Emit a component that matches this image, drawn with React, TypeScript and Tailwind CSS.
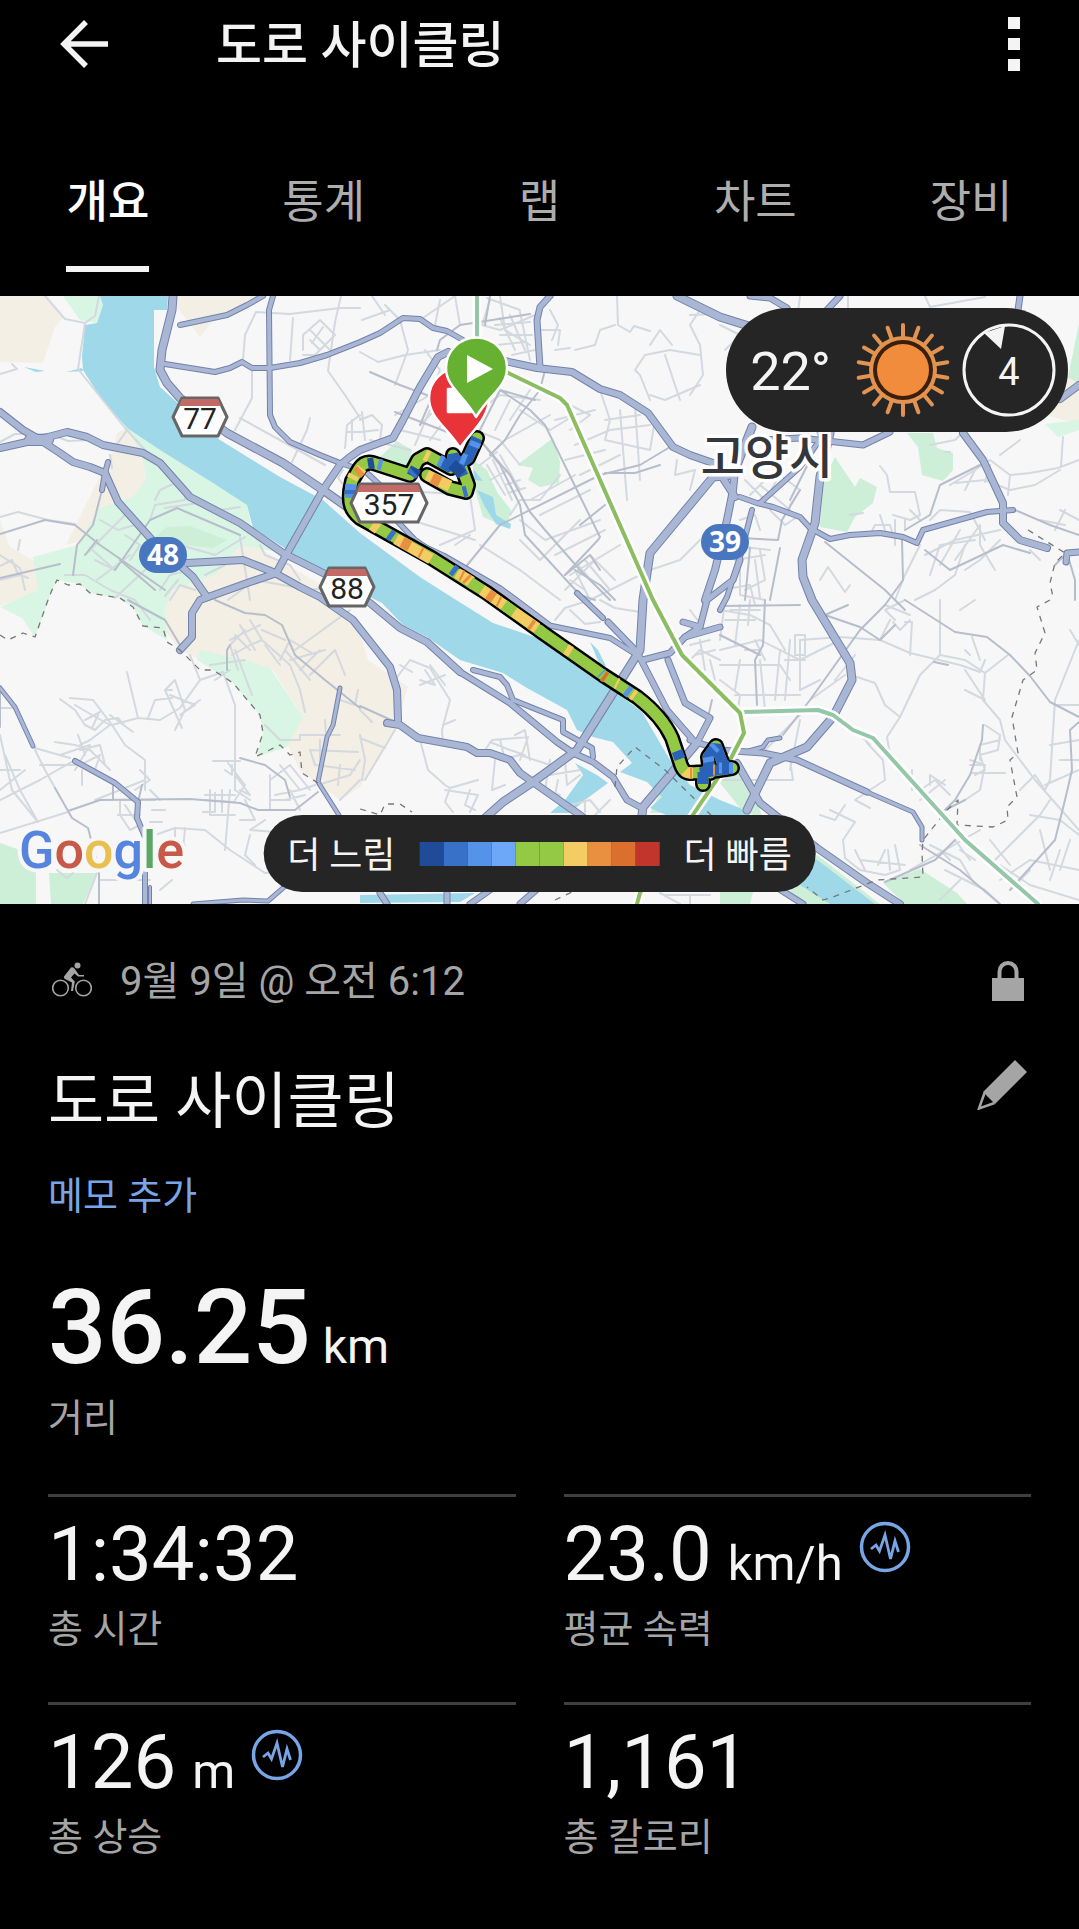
import { useState } from "react";

const tabs = ["개요", "통계", "랩", "차트", "장비"];

const speedColors = [
  "bg-[#1f4b99]",
  "bg-[#3871c8]",
  "bg-[#5593ea]",
  "bg-[#6ca7f8]",
  "bg-[#94c945]",
  "bg-[#94c945]",
  "bg-[#f3cd63]",
  "bg-[#e98f40]",
  "bg-[#db6f2d]",
  "bg-[#c1352c]",
];

const stats = [
  { value: "1:34:32", unit: "", label: "총 시간", graph: false },
  { value: "23.0", unit: "km/h", label: "평균 속력", graph: true },
  { value: "126", unit: "m", label: "총 상승", graph: true },
  { value: "1,161", unit: "", label: "총 칼로리", graph: false },
];

// ---- map data ----

const beige = [
  "M0 296H48L63 317L55 327L43 363L0 362Z",
  "M175 296H260L245 305L215 318L200 337L177 307Z",
  "M117 433L127 428L143 460L146 480L137 497L112 505L85 540L66 545L113 450Z",
  "M0 520L10 547L33 560L40 590L0 606Z",
  "M160 560L240 537L330 590L362 640L368 660L408 687L395 730L360 787L340 800L300 770L287 743L303 717L273 670L200 660L180 650L165 630Z",
  "M1079 372L1050 384L1045 415L1079 424Z",
];

const lightGreen = [
  "M63 296H100L103 305L97 323L80 320Z",
  "M127 428L160 450L213 483L247 505L253 535L283 553L240 545L215 575L172 590L165 610L167 640L143 626L133 607L118 598L90 593L80 584L57 580L50 596L35 637L22 618L0 607L38 590L33 557L77 545L100 508L133 497L146 480L143 460Z",
  "M200 650L245 660L270 668L303 717L287 747L257 757L263 733L260 715L233 683L213 670L197 660Z",
  "M1045 424L1079 420V430L1058 437Z",
];

const green = [
  "M167 527L190 526L227 540L213 548L185 545L155 537Z",
  "M380 457L397 441L412 450L408 470L385 465Z",
  "M473 460L487 470L497 492L511 510L507 527L483 517L473 483Z",
  "M553 438L560 462L559 483L540 487L528 480L533 468L517 465Z",
  "M835 457L855 487L860 478L877 487L873 503L855 517L847 532L820 527L822 483Z",
  "M907 433H933L937 448L953 453L953 470L943 481L922 475L918 447Z",
  "M1079 323L1068 377L1079 384Z",
  "M883 883L920 869L957 893L967 904H905Z",
  "M817 855L880 904H800L790 890Z",
  "M720 783L737 767L757 800L763 820L740 808Z",
  "M663 787L680 813H650Z",
  "M0 843L20 850L36 873V904H0ZM49 873H97L83 904H51Z",
  "M720 892H753L750 904H720Z",
];

const water = [
  "M168 296H100L103 305L97 323L85 325L82 357L83 370L100 397L127 428L160 450L213 483L247 505L253 528L283 547L310 567L345 585L382 603L403 625L427 637L460 660L503 673L527 688L567 710L577 730L593 737L613 742L632 763L620 772L647 782L662 797L650 808L700 830L760 870L797 883L830 904H875L820 862L740 808L720 800L690 785L670 760L642 712L600 680L543 640L493 623L453 598L420 577L360 533L342 517L323 500L280 477L220 440L180 405L160 387L154 367V310H167Z",
  "M477 490L493 497L496 515L511 524L510 529L496 524L485 507Z",
  "M474 470L483 481L474 480Z",
  "M575 763L597 775L608 783L585 800L570 813H550L565 800L583 775Z",
  "M590 642L598 650L606 666L600 665Z",
  "M360 895L475 893L460 902L360 903Z",
  "M24 367L45 371L36 372ZM66 372L82 368L83 371Z",
];

const minorRoads = [
  "M45 296L65 319L85 323L95 316L99 296",
  "M85 323L78 369L125 428L145 450",
  "M0 374L17 369L12 364",
  "M0 442L15 434L50 434L68 441L90 440",
  "M113 450L127 430M110 455L112 468",
  "M0 517L18 512L48 520L75 524",
  "M115 598L145 570L180 545L215 555L245 537M150 620L135 600L110 590L85 575L65 575",
  "M155 500L160 490L175 483M150 520L155 505L185 500L185 487M165 508L205 502M220 510L240 507",
  "M90 548L115 570L95 560M85 555L120 520L128 512M100 520L118 530L135 525M97 580L130 555M125 535L140 545L130 560",
  "M240 537L250 600M260 545L265 555L290 565L300 580M228 600L255 580L310 590L345 585",
  "M170 600L180 585L195 590M205 575L225 565M160 590L170 575L190 570M165 596L178 580",
  "M0 555L20 568L25 590M0 566L12 560L18 574L28 578M0 580L20 575M18 550L20 540",
  "M243 360L245 335L256 312L290 314L340 308L360 308M293 318L290 360M341 296L335 322L328 371L345 395L360 418",
  "M303 350L303 335L320 320L335 335L315 355H303M310 330L330 350M320 350L310 340M323 327L312 343",
  "M252 370V398L235 430M240 418L325 465M310 418L307 430L292 462L300 445",
  "M345 448L347 425L360 415M348 432H360M352 440V420M343 470L338 478L345 487",
  "M362 320L390 310M360 352L378 362L405 355L440 350M385 305L400 320L408 350L395 385M372 296L385 315M420 320L455 296M440 300L435 325L450 335",
  "M455 296L460 325M490 300L482 325L500 330L535 315M487 298L520 310M500 296L505 330L530 345M540 330L560 330L558 345",
  "M495 325L530 322M500 318L515 350M510 315L525 350M520 312L530 360M500 335L532 335M497 345L525 342M512 355L535 350",
  "M550 310L558 325L552 340M555 350L570 348M575 350L595 345L600 330L615 325M617 296L618 325L630 332L634 326L650 331",
  "M360 420L372 415L382 425L380 440M360 432L378 430M362 412L365 440M370 440L410 450",
  "M395 415L430 395L440 370L425 350M400 430L440 440M420 425L440 405M440 405L460 380M430 440L460 400M415 445L430 410",
  "M480 410L500 395L540 400M495 430L510 400M505 440L550 415M475 430L500 440L520 465M520 410L550 430L575 415M530 390L510 420",
  "M560 400L590 415L570 430M555 420L595 410M575 445L610 430M565 460L605 450M580 475L620 455M530 500L575 475M540 515L590 490",
  "M508 470L490 480M500 455L520 490M493 460L512 500M487 465L505 495M497 452L480 465M505 485L520 480M508 493L525 488",
  "M510 515L520 500L540 500L560 475M520 520L545 540M545 540L600 520M555 555L605 530M570 575L620 545M520 540L540 560L580 520",
  "M575 570L590 600M585 560L610 590M565 590L595 560M570 580L585 590M578 565L595 585M590 555L615 580",
  "M600 390L610 420L605 440M605 420L640 415M610 430L650 425M620 410L625 475M635 405L640 480M605 440L650 450L655 420M650 395L665 400L700 385M650 400L640 375L635 370L645 355L670 350L700 355M665 355L680 400",
  "M700 310L690 325L700 345L703 375L690 395M690 315L715 314M672 345L660 330L650 345",
  "M677 460L675 475L695 470L690 490M625 475L627 500M590 600L650 570L680 560L700 540",
  "M360 500L390 490L470 495L475 530M395 515L475 540M440 545L475 530M455 545L470 535M480 545L520 570L560 600",
  "M800 296L797 320M848 296V320M925 296L930 307L985 297M720 325L740 335M735 340L725 350",
  "M880 466L887 475L890 492H915L920 515L910 520L893 515M930 445L955 440L965 430M945 452H950M950 485L975 470L990 460L1010 475L1030 473L1058 468L1079 460",
  "M955 483L985 480L1010 490L1035 485L1060 470M975 470L965 490M990 465L985 482M1010 475L1008 495M1063 437L1061 466M1020 440L1000 455M950 410L990 420L1020 415",
  "M930 520L940 510L970 512L985 540M925 555L955 540L1000 530M940 565L960 530M955 560L980 525M965 570L980 560L1000 540M980 525V545L995 570",
  "M895 600L905 575L920 545M915 600L935 590L955 575L965 545M930 575L940 545L975 540",
  "M850 515L863 513M870 535L875 525L890 525L893 535M880 515L885 530M895 520V545M905 528V520M910 510L920 520",
  "M820 580L828 567M828 567L845 592L850 585",
  "M725 545L770 550M735 560L765 555M740 570V595L765 600M720 590L750 585L755 605M760 550L765 580L745 590M755 560L760 598",
  "M745 480L765 500L780 475L800 490L790 505M750 495L775 470M760 485L790 510M770 510L785 525L800 515M740 520L755 515L760 530",
  "M1060 510L1079 520M1055 530L1065 510M1040 520L1065 525M1030 550L1040 560M720 610L750 615L770 625L785 650",
  "M725 600L720 640M740 605L735 645M750 600L748 625M730 610H760M725 620H755M720 650L760 640L800 660L840 640M720 665H780L790 680M740 660L735 690",
  "M780 650L775 700M790 640L785 700M760 660L765 710M735 695H800M720 680L740 695L738 710M800 640V690M795 635H805V655H795ZM785 660H805M755 640L765 660M760 650H745",
  "M800 640L840 637L880 640L910 653L960 665L980 672L985 660",
  "M895 620L885 610L905 600M905 622H912L910 655M890 620L880 640M893 622L900 630L910 620M885 605L910 615",
  "M940 600L940 655L920 675L900 717L887 737L890 755M848 674L875 683L885 705L900 717",
  "M940 655L965 660L985 673L1008 655M972 637L980 660M985 673L983 700L1000 720L1005 740L1020 760L1035 780L1079 830",
  "M965 670L985 700L965 690M960 610L975 600M965 650L970 655",
  "M985 725L1000 735L998 750L980 755L985 770L975 775M970 760L985 765L980 790L965 800M970 765H985M972 773H1005M980 760V745L1000 740",
  "M1079 640L1055 700L1050 780L1045 790L1035 775L1020 790M1079 740L1050 745M1045 785L1079 770M1050 800L1040 815L1010 845L990 865",
  "M1055 705H1079M1030 815L1060 820L1079 835M1070 630L1079 645M1060 760H1079",
  "M867 743L883 760L885 780L870 790L855 800L870 808M845 805L835 820L820 815M830 810L855 822L843 840L845 858",
  "M845 858L860 870L885 875L900 870L895 845M855 850L865 870M860 860L905 865M878 865L885 850M890 870L888 850M840 862L850 875",
  "M910 870L945 850L980 830M930 845L960 860L975 885M940 850L950 860M955 840L970 860M945 870L985 890L1000 904M960 850L975 860M960 880L940 900",
  "M990 840L1010 865M1000 865L1030 885L1079 900M1040 830L1050 870M1060 850L1050 880M1030 870L1010 890M1070 840L1060 870M1000 880L1030 860L1079 870",
  "M0 735L12 790L38 822M0 800L40 780L75 760M0 833L68 812M0 708H15M25 770L0 790M0 770H20M5 755L20 790L38 822M35 750L45 770L55 788M40 765H75M35 748L70 758",
  "M127 672L138 718L112 725L93 700L70 698M148 718L155 700L172 698M138 718L160 720L180 708L200 680L223 672M172 690L165 690L175 680L185 710L175 730M170 695L195 705L180 715L200 700M165 690L182 728",
  "M60 699L75 710L85 725L95 730L105 720L118 718L124 725M75 705L92 715L110 725M85 720L100 712M92 728L98 715M110 725L90 740L80 745M112 725L125 745L145 760V790M133 732L110 715",
  "M55 742L75 745L90 750L110 770M60 755L90 745L75 770M78 735L85 755M80 750L100 745L105 765M80 765L100 755L95 770M82 770V785",
  "M200 680L190 655M223 672L235 705V790M215 680L230 670M210 665L245 660M213 761H240M232 765V775L225 770M235 775L250 795L240 790M228 763L245 785L235 800",
  "M205 795H235M205 800L235 802M210 790V815H235M215 793V812M245 800L255 820H240M222 790V812M203 812H215M235 790L250 800",
  "M120 800V815L130 830L140 825M120 800H155M95 800L120 790L145 780M125 805L135 820M118 815H140M150 790L160 800M152 810H165M150 822H162M140 770L150 780L135 790",
  "M155 835L175 828L205 830L230 850L265 873L300 870M175 828V845M185 828L183 850M170 845H185M250 835L245 855L255 865M230 790L225 850M265 820L250 830L275 832",
  "M100 880H150M160 890L172 880M85 904L97 873M57 870L67 878L73 873",
  "M245 630L230 645L238 670M230 640L260 625M235 635L250 650M240 625L255 650M250 620L262 640M232 655L250 645L262 640L290 665L300 690M235 650L252 695",
  "M265 645L280 665M262 630L285 640M295 650L350 610M280 660L290 640L315 655M290 660L325 650M300 670L320 650M310 675L335 650L345 675M285 650L310 680M300 690L305 712",
  "M265 725L280 740H300V735H340M310 750L358 752M310 750L315 765L355 770M320 760V740M340 765L338 785M325 720L326 735M340 700L355 705L358 690M318 785L350 775L360 760",
  "M270 780L290 765L310 790M275 795L300 790L315 785M285 800L305 795M280 765L300 790M290 790L300 810M270 775V810M270 800H290M340 800L360 780",
  "M395 680L410 660L430 668L450 700L442 730L443 745M420 685L445 675M425 670L435 685L420 680M430 665L445 685M400 665L412 672M443 725L455 720",
  "M420 740L428 770L445 785L450 788L445 802L453 812M445 790L478 795L470 812M470 790L465 805L475 810M450 788L478 780",
  "M485 750L492 740L528 737L520 760M490 742L510 750L525 755M500 760L520 755L550 765M495 760L492 790L505 785M500 740L505 760M515 735L525 730L530 760M550 760L545 790L560 795M565 760L567 785L580 775M558 780L555 795M550 775L580 770",
  "M570 805L590 800L600 812M585 800V812M590 820L610 800",
  "M555 620L565 608L590 600M600 600L615 608L640 612M570 610L585 624L600 622",
  "M690 645L710 640M695 655L715 650M700 640L705 670M690 660L700 650L720 660M710 660L715 680M690 610L705 630",
  "M360 735L365 760L362 780M360 738L385 748M365 780L395 730M360 710L372 722",
  "M710 780H793L790 760M790 770L800 720M760 755L800 715M830 625L845 650L848 674M810 700L845 675M800 690L820 680M855 655L835 680M835 720L855 730L870 745",
  "M660 893L680 904M665 895H710M690 895V904",
  "M912 770V790M920 790L935 780L950 795M930 785V775L945 785M920 800L945 780",
];

const mediumRoads = [
  "M0 534L45 520L75 525L100 545L165 590M0 578L60 564M102 490L93 525L77 545L73 575",
  "M115 570L150 520L177 508L240 535M120 560L155 590M97 540L85 555",
  "M128 600L165 620L180 645M215 600L245 613L265 615L282 625L295 655L325 680L360 708",
  "M227 670V650L230 645M68 811L100 800L190 799L240 803L258 810H295L318 792M240 758L265 765L285 780L290 797M55 788L72 818L88 828L99 870V904M142 785L138 802M113 785V800",
  "M0 690V727M360 706L400 724",
  "M370 372L400 385L440 400L450 405M395 412L455 435L480 440L510 475L530 512L545 530L580 570L610 600",
  "M500 390L530 410L545 425L600 537L598 540L565 575M545 370L540 390L520 415L505 440L490 455M535 400L500 390L480 430",
  "M455 580L500 525L600 475L640 465L670 447M480 440L500 465L520 505L525 535L580 595L595 600",
  "M420 425L435 390M437 350L440 340L460 325L530 314M490 296L485 325M565 575L590 555L600 570M580 525L605 505",
  "M605 473L635 473L660 465M800 380L820 440L790 500",
  "M780 548L770 600M722 537L778 540L782 520L800 490M750 548L745 600M765 600L763 645L755 660L757 705",
  "M825 542L885 590L905 610M902 540L903 580L885 605L860 630L810 700L783 735",
  "M905 600L955 632L987 637L1010 655L1030 676L1050 702L1079 717M848 605L825 615L860 627L880 640L895 625",
  "M925 550L950 570L1003 545L1030 553M1015 510L1050 525L1079 535M905 530L930 515L940 485L980 465",
  "M934 662L948 665M720 635L760 655",
  "M1079 722L1070 730L1072 770L1065 800L1055 840L1010 890M983 725L982 740L970 775L955 800L945 810L965 800M920 845L960 870L1000 904M955 840L935 860L885 882",
  "M1055 565L1067 553L1075 580V600M720 606L800 605",
  "M705 730L712 700M615 600L600 585L575 570",
];

const roads = [
  { w: 9, d: "M173 296L172 310L162 350L160 370L167 383L180 398L227 433L283 463L323 490L347 507L370 523L443 557L500 590L547 625" },
  { w: 6, d: "M547 625L610 638L637 655" },
  { w: 6, d: "M180 325L227 315L247 305L263 296" },
  { w: 6, d: "M165 364L215 372L230 368L242 362L252 368H270L300 363L327 355L360 342L380 333L403 318L420 319L433 328L447 331L463 340L480 350" },
  { w: 8, d: "M500 360L537 368L572 372L600 389L620 395L648 413L673 447L690 455L713 463L735 497" },
  { w: 6, d: "M273 296L269 310L270 415L275 427L290 442L320 455L340 463L365 471L385 490L398 522L415 540L447 562" },
  { w: 8, d: "M448 352L438 357L420 387L403 420L393 438L360 450L350 457L340 465L323 490L285 557L278 570" },
  { w: 8, d: "M0 412L23 430L37 438L60 453L73 462L90 467L105 473L118 502L152 540L193 577L207 597" },
  { w: 8, d: "M0 448L27 442L48 437L67 432L87 437L103 445L143 453L160 463L190 497L240 523L283 553L327 575L370 603L400 628L427 642L460 672" },
  { w: 12, d: "M30 440H48" },
  { w: 7, d: "M460 672L510 703L557 742L573 753L593 762L613 777L627 800L640 807" },
  { w: 8, d: "M187 563L243 560L273 572L300 587L320 597L353 620L390 667L397 690L398 720" },
  { w: 8, d: "M277 573L250 582L200 600L192 613V637L180 650" },
  { w: 6, d: "M108 462L105 473L102 490" },
  { w: 5, d: "M0 688L15 707L33 746" },
  { w: 6, d: "M75 761L115 783L138 802L137 818L145 837V904" },
  { w: 5, d: "M340 688L333 725L327 737L318 782L342 820" },
  { w: 4, d: "M150 887V904" },
  { w: 5, d: "M193 904L243 900L268 901L283 888L310 870" },
  { w: 8, d: "M387 723L400 725L418 738L467 747L477 753H490L510 760L520 773L577 813L600 830" },
  { w: 9, d: "M752 427L733 475L713 477L650 553L643 600L640 650L613 693L577 750L533 782L503 802L485 818" },
  { w: 6, d: "M473 670L500 677L507 685L513 700L563 720V732L592 748L593 757" },
  { w: 6, d: "M577 593L603 618" },
  { w: 7, d: "M608 622L637 652L667 710L693 740" },
  { w: 7, d: "M643 660L670 653L685 637L720 627M668 660L685 703L710 718L697 743" },
  { w: 7, d: "M740 560L733 580L707 600L700 627L685 637M683 622L700 627" },
  { w: 9, d: "M697 743L643 807L640 830" },
  { w: 7, d: "M690 740L720 750L763 753L797 760L867 792" },
  { w: 5, d: "M867 792L913 812L922 827V840" },
  { w: 9, d: "M830 433L820 477L815 523L802 560L803 577L812 600L850 663L852 680L833 717L807 747L770 763L747 810" },
  { w: 8, d: "M737 763L760 803L817 848L867 883L900 904" },
  { w: 7, d: "M770 883L803 904M827 310L840 296M750 296L770 298L787 308M1020 296L1018 310" },
  { w: 9, d: "M677 296L720 317L755 328" },
  { w: 5, d: "M745 752L763 747L768 740L780 738" },
  { w: 8, d: "M1060 399L1079 385M963 433L983 460L1003 503V523L1020 540L1047 548" },
  { w: 6, d: "M740 497L757 503L773 507L800 517L810 528L830 539L850 535L880 533L903 537L917 543L923 530L987 512L1013 510" },
  { w: 6, d: "M752 510L740 557L727 597L720 610M760 503L800 467L820 440" },
  { w: 8, d: "M735 470L733 490L727 520L715 570L705 600" },
  { w: 7, d: "M760 440L800 438L863 445L890 432M550 296L540 307L537 320L540 368" },
  { w: 7, d: "M380 893L387 904M447 893V904M490 890L470 904M536 890L520 904M1079 552L1067 553L1066 562" },
];

const borders = [
  "M0 635L8 640L23 633L35 637L48 600L52 590L57 580L68 585L80 584L90 593L120 598L133 607L143 626L163 628L167 642L180 650L200 670L213 670L233 683L260 715L263 733L255 757L280 745L290 755L300 752L302 773L318 783",
  "M615 787L617 767L635 747L665 770L713 817",
  "M1050 600L1037 607L1045 633L1035 653L1037 670L1023 680L1012 717L1018 753L1010 760L1017 797L1007 807L1008 820L993 827L957 825L958 800L947 810L923 840L922 853L923 877L877 880L833 897L823 900L807 887",
  "M1028 530L1065 553L1055 563L1050 583L1053 597M360 809L380 815L385 804L400 804L412 812M555 900L572 892",
];

const ridePath =
  "M477 438L468 458L458 465L453 455L451 468L427 455L418 460L410 475L373 463Q364 461 359 469L352 481Q348 497 351 506Q353 512 360 518L430 557L487 593L543 633L603 675L637 697Q662 716 672 738L680 762Q683 773 690 773L707 772L732 768M462 468L468 485L466 492L450 488L427 475M710 773L708 757L716 746L722 762M703 772L703 784";

// coloured stretches laid over the green track
const ridePieces = [
  { c: "#2a62b8", d: "M477 438L468 458L458 465L453 455L451 468L440 461M458 465L463 476" },
  { c: "#1f4b99", d: "M452 464L462 474M374 463L368 464M416 468L412 476" },
  { c: "#5593ea", d: "M476 442L474 447M461 458L466 460M443 462L439 460M382 465L378 464M351 484L350 498" },
  { c: "#f3cd63", d: "M362 468L359 472M429 457L425 455M450 486L427 475M352 479L354 475M372 525L378 529M396 539L431 559" },
  { c: "#e98f40", d: "M402 542L410 546M432 478L440 482M420 552L422 553M357 474L361 470" },
  { c: "#3871c8", d: "M389 534L393 537M452 569L456 572M350 490L350 494M467 491L463 492M414 472L411 475" },
  { c: "#f3cd63", d: "M457 573L472 582M482 590L507 607M514 612L537 628" },
  { c: "#e98f40", d: "M461 575L463 576M466 578L468 580M488 594L494 598M498 601L500 602M530 624L533 626" },
  { c: "#94c945", d: "M504 605L514 612M470 582L474 585M538 629L543 633" },
  { c: "#f3cd63", d: "M566 649L571 652M616 683L618 684M632 694L635 696" },
  { c: "#db6f2d", d: "M603 676L606 678" },
  { c: "#5593ea", d: "M626 690L630 693M601 673L602 674" },
  { c: "#2a62b8", d: "M677 751L680 759M703 772L703 784M710 773L708 757L716 746L722 762L728 768L700 773M732 768L722 770" },
  { c: "#5593ea", d: "M709 762L708 757M713 749L716 746M719 768L722 768M729 768L733 768" },
  { c: "#f3cd63", d: "M685 771Q687 773 693 773" },
  { c: "#e98f40", d: "M690 773L692 773M713 770L715 770" },
];

function HexShield({ x, y, label, half }: { x: number; y: number; label: string; half: number }) {
  const i = half - 9;
  return (
    <g transform={`translate(${x} ${y})`}>
      <path
        d={`M${-half} 0L${-i} -19H${i}L${half} 0L${i} 19H${-i}Z`}
        fill="#fff"
        stroke="#666"
        strokeWidth="3"
        strokeLinejoin="round"
      />
      <path d={`M${-i} -18H${i}L${i + 3} -11H${-i - 3}Z`} fill="#c46a66" />
      <text y="12" textAnchor="middle" fontSize="30" fill="#222">
        {label}
      </text>
    </g>
  );
}

function RoundShield({ x, y, label }: { x: number; y: number; label: string }) {
  return (
    <g transform={`translate(${x} ${y})`}>
      <rect x="-24" y="-18" width="48" height="36" rx="18" fill="#4877c0" />
      <text
        y="10"
        textAnchor="middle"
        fontSize="28"
        fontWeight="700"
        fill="#fff"
        fontFamily="'Noto Sans', sans-serif"
      >
        {label}
      </text>
    </g>
  );
}

function RouteMap() {
  return (
    <svg
      viewBox="0 296 1079 608"
      className="block w-full h-auto bg-[#f7f7f8]"
      role="img"
      aria-label="고양시 경로 지도"
    >
      <g>
        {beige.map((d) => <path key={d} d={d} fill="#f4efe4" />)}
        {lightGreen.map((d) => <path key={d} d={d} fill="#d9f5e3" />)}
        {green.map((d) => <path key={d} d={d} fill="#cdefd7" />)}
        {water.map((d) => <path key={d} d={d} fill="#9fd8e9" />)}
      </g>
      <g fill="none" strokeLinejoin="round" strokeLinecap="round">
        <g stroke="#d3d9df" strokeWidth="2">
          {minorRoads.map((d) => <path key={d} d={d} />)}
        </g>
        <g stroke="#b7becb" strokeWidth="2">
          {mediumRoads.map((d) => <path key={d} d={d} />)}
        </g>
        <g stroke="#7282ab">
          {roads.map((r) => <path key={r.d} d={r.d} strokeWidth={r.w} />)}
        </g>
        <g stroke="#a9b7d5">
          {roads.map((r) => <path key={r.d} d={r.d} strokeWidth={r.w - 2} />)}
        </g>
        <g stroke="#777" strokeWidth="1.3" strokeDasharray="6 6" strokeLinecap="butt">
          {borders.map((d) => <path key={d} d={d} />)}
        </g>
        {/* rail lines */}
        <path d="M477 296V345M740 712L818 710L833 715L853 730L873 738L965 840L1038 904" stroke="#fff" strokeWidth="9" />
        <path d="M477 296V345M740 712L818 710L833 715L853 730L873 738L965 840L1038 904" stroke="#93c7a8" strokeWidth="4" />
        <path d="M500 369L560 398L567 405L653 600L682 655L740 713L744 733L730 760L640 893L637 904" stroke="#fff" strokeWidth="9" />
        <path d="M500 369L560 398L567 405L653 600L682 655L740 713L744 733L730 760L640 893L637 904" stroke="#8dbd62" strokeWidth="4" />
        {/* recorded ride */}
        <path d={ridePath} stroke="#000" strokeWidth="16" />
        <path d={ridePath} stroke="#94c945" strokeWidth="11" />
        <g strokeWidth="11" strokeLinecap="butt" strokeLinejoin="bevel">
          {ridePieces.map((p) => <path key={p.d} d={p.d} stroke={p.c} />)}
        </g>
      </g>

      <HexShield x={200} y={417} label="77" half={27} />
      <HexShield x={389} y={503} label="357" half={38} />
      <HexShield x={347} y={587} label="88" half={27} />
      <RoundShield x={163} y={555} label="48" />
      <RoundShield x={725} y={542} label="39" />

      <text
        x="767"
        y="474"
        textAnchor="middle"
        fontSize="48"
        fontWeight="500"
        fill="#33363b"
        stroke="#fff"
        strokeWidth="7"
        strokeLinejoin="round"
        paintOrder="stroke"
      >
        고양시
      </text>

      <g stroke="#fff" strokeWidth="2.5" strokeLinejoin="round">
        <path d="M460 448C447 427 429 418 429 398A30 30 0 0 1 489 398C489 418 473 430 460 448Z" fill="#e83338" />
        <rect x="448" y="389" width="23" height="23" fill="#fff" />
        <path d="M476 417C463 394 446 387 446 368A30.500 30.500 0 0 1 507 368C507 387 490 394 476 417Z" fill="#67b132" />
        <path d="M467 355L493 369L467 383Z" fill="#fff" stroke="none" />
      </g>

      <text
        x="19"
        y="868"
        fontSize="52"
        fontWeight="500"
        stroke="#f7f7f8"
        strokeWidth="8"
        strokeLinejoin="round"
        paintOrder="stroke"
      >
        <tspan fill="#5684de">G</tspan>
        <tspan fill="#c85848">o</tspan>
        <tspan fill="#e9c050">o</tspan>
        <tspan fill="#5684de">g</tspan>
        <tspan fill="#5aa663">l</tspan>
        <tspan fill="#c85848">e</tspan>
      </text>
    </svg>
  );
}

function SunIcon() {
  return (
    <svg viewBox="-48 -48 96 96" className="size-24" aria-hidden="true">
      {Array.from({ length: 18 }, (_, n) => (
        <path
          key={n}
          d="M0 -33V-45"
          stroke="#e39350"
          strokeWidth="4"
          strokeLinecap="round"
          transform={`rotate(${n * 20})`}
        />
      ))}
      <circle r="34" fill="#e39350" />
      <circle r="30" fill="#3a200c" />
      <circle r="26" fill="#f08c3c" />
    </svg>
  );
}

function WindDial() {
  return (
    <svg viewBox="-48 -48 96 96" className="size-24" role="img" aria-label="풍속 4">
      <circle r="45" fill="none" stroke="#f4f4f4" strokeWidth="3" />
      <path d="M-25 -37L-4 -44L-8 -21Z" fill="#f4f4f4" />
      <text y="15" textAnchor="middle" fontSize="38" fill="#f4f4f4">
        4
      </text>
    </svg>
  );
}

function CyclistIcon() {
  return (
    <svg viewBox="0 0 40 36" className="w-10 h-9 shrink-0" fill="none" stroke="#a5a5a5" aria-hidden="true">
      <circle cx="8.500" cy="26" r="7.800" strokeWidth="1.600" />
      <circle cx="31.500" cy="26" r="7.800" strokeWidth="1.600" />
      <circle cx="25.500" cy="3.500" r="3" fill="#a5a5a5" stroke="none" />
      <path d="M19 5.500L12 14.500Q11.500 16 13 17L20 20.500L19 29H21L22.800 19.500L19 15.500L22.500 11.500L26 14.500H32V13H27L22.500 6.500Q20.500 4.500 19 5.500Z" fill="#a5a5a5" stroke="none" />
    </svg>
  );
}

function LockIcon() {
  return (
    <svg viewBox="0 0 32 41" className="w-8 h-[41px]" role="img" aria-label="비공개">
      <path d="M7.500 20V11.500a8.500 8.500 0 0 1 17 0V20" fill="none" stroke="#a5a5a5" strokeWidth="4" />
      <rect y="18" width="32" height="23" fill="#a5a5a5" />
    </svg>
  );
}

function PencilIcon() {
  return (
    <svg viewBox="0 0 50 50" className="size-[50px]" aria-hidden="true">
      <path d="M38 0L50 12L18 44L6 32Z" fill="#a5a5a5" />
      <path d="M7.500 33L2 48.500L17.500 43" fill="none" stroke="#a5a5a5" strokeWidth="2.500" />
    </svg>
  );
}

function GraphIcon() {
  return (
    <svg viewBox="0 0 52 52" className="size-[52px]" fill="none" stroke="#78a5e6" aria-hidden="true">
      <circle cx="26" cy="26" r="23.500" strokeWidth="3.500" />
      <path d="M12 28L17 24L20.500 30L26 14L31.500 38L36 20L39.500 31" strokeWidth="2.800" />
    </svg>
  );
}

export default function App() {
  const [active, setActive] = useState("개요");

  return (
    <div className="min-h-screen bg-black text-[#f4f4f4] font-['Roboto','Noto_Sans_CJK_KR',sans-serif]">
      <header className="flex items-center h-[88px] pl-[60px] pr-[59px]">
        <button aria-label="뒤로">
          <svg viewBox="0 0 48 48" className="size-12" fill="none" stroke="#f4f4f4" strokeWidth="5.500">
            <path d="M48 24H4M26 2L4 24L26 46" />
          </svg>
        </button>
        <h1 className="ml-[108px] pt-1 flex-1 text-[50px] leading-[60px] font-medium">도로 사이클링</h1>
        <button aria-label="더보기" className="flex flex-col gap-[9px]">
          <span className="size-3 bg-[#f4f4f4]" />
          <span className="size-3 bg-[#f4f4f4]" />
          <span className="size-3 bg-[#f4f4f4]" />
        </button>
      </header>

      <nav role="tablist" className="grid grid-cols-5 pt-[48px] pb-6">
        {tabs.map((tab) => (
          <button
            key={tab}
            role="tab"
            aria-selected={tab === active}
            onClick={() => setActive(tab)}
            className="flex justify-center"
          >
            <span
              className={`block h-[136px] pt-8 text-[45px] leading-[70px] border-b-[6px] ${
                tab === active ? "border-[#f4f4f4] text-white font-medium" : "border-transparent text-[#adadad]"
              }`}
            >
              {tab}
            </span>
          </button>
        ))}
      </nav>

      <section className="relative">
        <RouteMap />
        <div className="absolute top-3 right-[11px] flex items-center h-[124px] pl-6 pr-[11px] rounded-full bg-[#252525]">
          <span className="pt-1 text-[54px] leading-[60px]">22°</span>
          <div className="flex gap-[10px] ml-6">
            <SunIcon />
            <WindDial />
          </div>
        </div>
        <div className="absolute bottom-3 left-1/2 -translate-x-1/2 flex items-center h-[77px] px-6 rounded-full bg-[#252525] whitespace-nowrap text-[36px] leading-[48px]">
          <span className="pt-1">더 느림</span>
          <div className="flex mx-6">
            {speedColors.map((c, n) => (
              <span key={n} className={`size-6 ${c}`} />
            ))}
          </div>
          <span className="pt-1">더 빠름</span>
        </div>
      </section>

      <main className="px-12 pt-12 pb-8">
        <div className="flex items-center h-14 pl-1 pr-[7px]">
          <CyclistIcon />
          <p className="ml-7 pt-1 flex-1 text-[40px] leading-[56px] text-[#a5a5a5]">9월 9일 @ 오전 6:12</p>
          <LockIcon />
        </div>

        <div className="flex items-start justify-between mt-[52px] pr-1">
          <h2 className="pt-0.5 text-[61px] leading-[80px]">도로 사이클링</h2>
          <button aria-label="이름 편집">
            <PencilIcon />
          </button>
        </div>
        <button className="block mt-6 text-[38px] leading-[60px] text-[#78a5e6]">메모 추가</button>

        <div className="mt-10">
          <p className="flex items-baseline gap-3">
            <span className="text-[103px] leading-[124px] font-medium">36.25</span>
            <span className="text-[48px] leading-none">km</span>
          </p>
          <p className="text-[38px] leading-[56px] text-[#a5a5a5]">거리</p>
        </div>

        <div className="grid grid-cols-2 gap-x-12 mt-12">
          {stats.map((s) => (
            <div key={s.label} className="h-[208px] pt-3 border-t-[3px] border-[#3f3f3f]">
              <div className="flex items-start">
                <p className="flex items-baseline gap-4">
                  <span className="text-[76px] leading-[90px]">{s.value}</span>
                  {s.unit && <span className="text-[49px] leading-none">{s.unit}</span>}
                </p>
                {s.graph && (
                  <button aria-label={`${s.label} 차트`} className="mt-3 ml-4">
                    <GraphIcon />
                  </button>
                )}
              </div>
              <p className="pt-0.5 text-[38px] leading-[56px] text-[#a5a5a5]">{s.label}</p>
            </div>
          ))}
        </div>
      </main>
    </div>
  );
}
